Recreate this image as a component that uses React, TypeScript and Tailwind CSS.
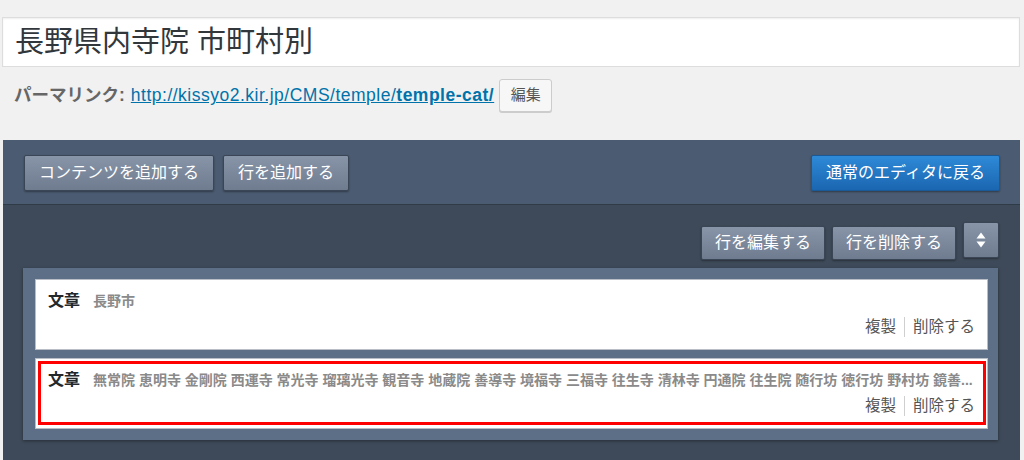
import React from "react";

const font = "font-['Liberation_Sans','Noto_Sans_CJK_JP',sans-serif]";

const templeList =
  "無常院 恵明寺 金剛院 西運寺 常光寺 瑠璃光寺 観音寺 地蔵院 善導寺 境福寺 三福寺 往生寺 清林寺 円通院 往生院 随行坊 徳行坊 野村坊 鏡善...";

function GrayButton({ children, className = "" }: { children: React.ReactNode; className?: string }) {
  return (
    <button
      className={`flex items-center justify-center whitespace-nowrap px-[14px] text-[16px] leading-none text-white rounded-[2px] border border-[#3a4655] bg-gradient-to-b from-[#8895a8] to-[#6f7c90] shadow-[0_1px_2px_rgba(0,0,0,0.35)] ${className}`}
    >
      {children}
    </button>
  );
}

function RowCard({ sub, highlight }: { sub: string; highlight?: boolean }) {
  return (
    <div className="relative h-[71px] bg-white border border-[#b9bec6] px-[12px] pt-[11px]">
      <div className="flex items-center h-[20px] whitespace-nowrap overflow-hidden">
        <span className="text-[16px] font-bold text-[#23282d] leading-none">文章</span>
        <span className="ml-[13px] text-[14px] font-bold text-[#8a8a8a] leading-none">{sub}</span>
      </div>
      <div className="mt-[6px] flex items-center justify-end h-[20px] text-[15.5px] text-[#555] leading-none">
        <span>複製</span>
        <span className="mx-[8px] w-px h-[20px] bg-[#cfcfcf]" />
        <span>削除する</span>
      </div>
      {highlight && (
        <div className="absolute top-[2px] left-[2px] right-[1px] bottom-[3px] border-[3px] border-[#ff0000] pointer-events-none" />
      )}
    </div>
  );
}

export default function App() {
  return (
    <div className={`${font} h-[460px] overflow-hidden bg-[#f1f1f1] pt-[17px]`}>
      {/* title */}
      <div className="ml-[2px] mr-[4px] h-[50px] bg-white border border-[#dddddd] shadow-[inset_0_1px_2px_rgba(0,0,0,0.07)] flex items-center px-[12px]">
        <span className="text-[29px] leading-none text-[#32373c]">長野県内寺院 市町村別</span>
      </div>

      {/* permalink */}
      <div className="mt-[12px] h-[33px] flex items-center pl-[14px]">
        <span className="text-[17.5px] font-bold text-[#666]">パーマリンク:</span>
        <a className="ml-[6px] text-[17.5px] tracking-[0.5px] text-[#0073aa] underline">
          http://kissyo2.kir.jp/CMS/temple/<span className="font-bold">temple-cat/</span>
        </a>
        <button className="ml-[5px] h-[33px] w-[53px] rounded-[3px] border border-[#cccccc] bg-[#f7f7f7] text-[15px] text-[#555] shadow-[0_1px_0_#cccccc]">
          編集
        </button>
      </div>

      {/* builder panel */}
      <div className="mt-[28px] ml-[3px] mr-[4px] h-[320px] bg-[#3e4a59]">
        <div className="h-[65px] bg-[#4b5b71] border-b border-[#303b48] pl-[21px] pr-[20px] pt-[15px] flex justify-between items-start">
          <div className="flex gap-[9px]">
            <GrayButton className="h-[36px]">コンテンツを追加する</GrayButton>
            <GrayButton className="h-[36px]">行を追加する</GrayButton>
          </div>
          <button className="h-[36px] px-[14px] whitespace-nowrap text-[16px] leading-none text-white rounded-[2px] border border-[#1a5a96] bg-gradient-to-b from-[#2e8ad8] to-[#1b66b0] shadow-[0_1px_2px_rgba(0,0,0,0.35)]">
            通常のエディタに戻る
          </button>
        </div>

        <div className="pl-[20px] pr-[21px] pt-[17px]">
          <div className="flex justify-end items-start gap-[7px]">
            <GrayButton className="h-[34px] mt-[4px] w-[124px] px-0">行を編集する</GrayButton>
            <GrayButton className="h-[34px] mt-[4px] w-[124px] px-0">行を削除する</GrayButton>
            <GrayButton className="h-[36px] w-[36px] px-0">
              <svg className="shrink-0" width="10" height="18" viewBox="0 0 10 18" fill="#ffffff">
                <path d="M5 1.5 L9.5 7.5 H0.5 Z" />
                <path d="M5 16.5 L9.5 10.5 H0.5 Z" />
              </svg>
            </GrayButton>
          </div>

          <div className="mt-[8px] mr-[1px] bg-[#5d6f87] pl-[12px] pr-[10px] py-[11px] flex flex-col gap-[8px] shadow-[0_1px_3px_rgba(0,0,0,0.4)]">
            <RowCard sub="長野市" />
            <RowCard sub={templeList} highlight />
          </div>
        </div>
      </div>
    </div>
  );
}
